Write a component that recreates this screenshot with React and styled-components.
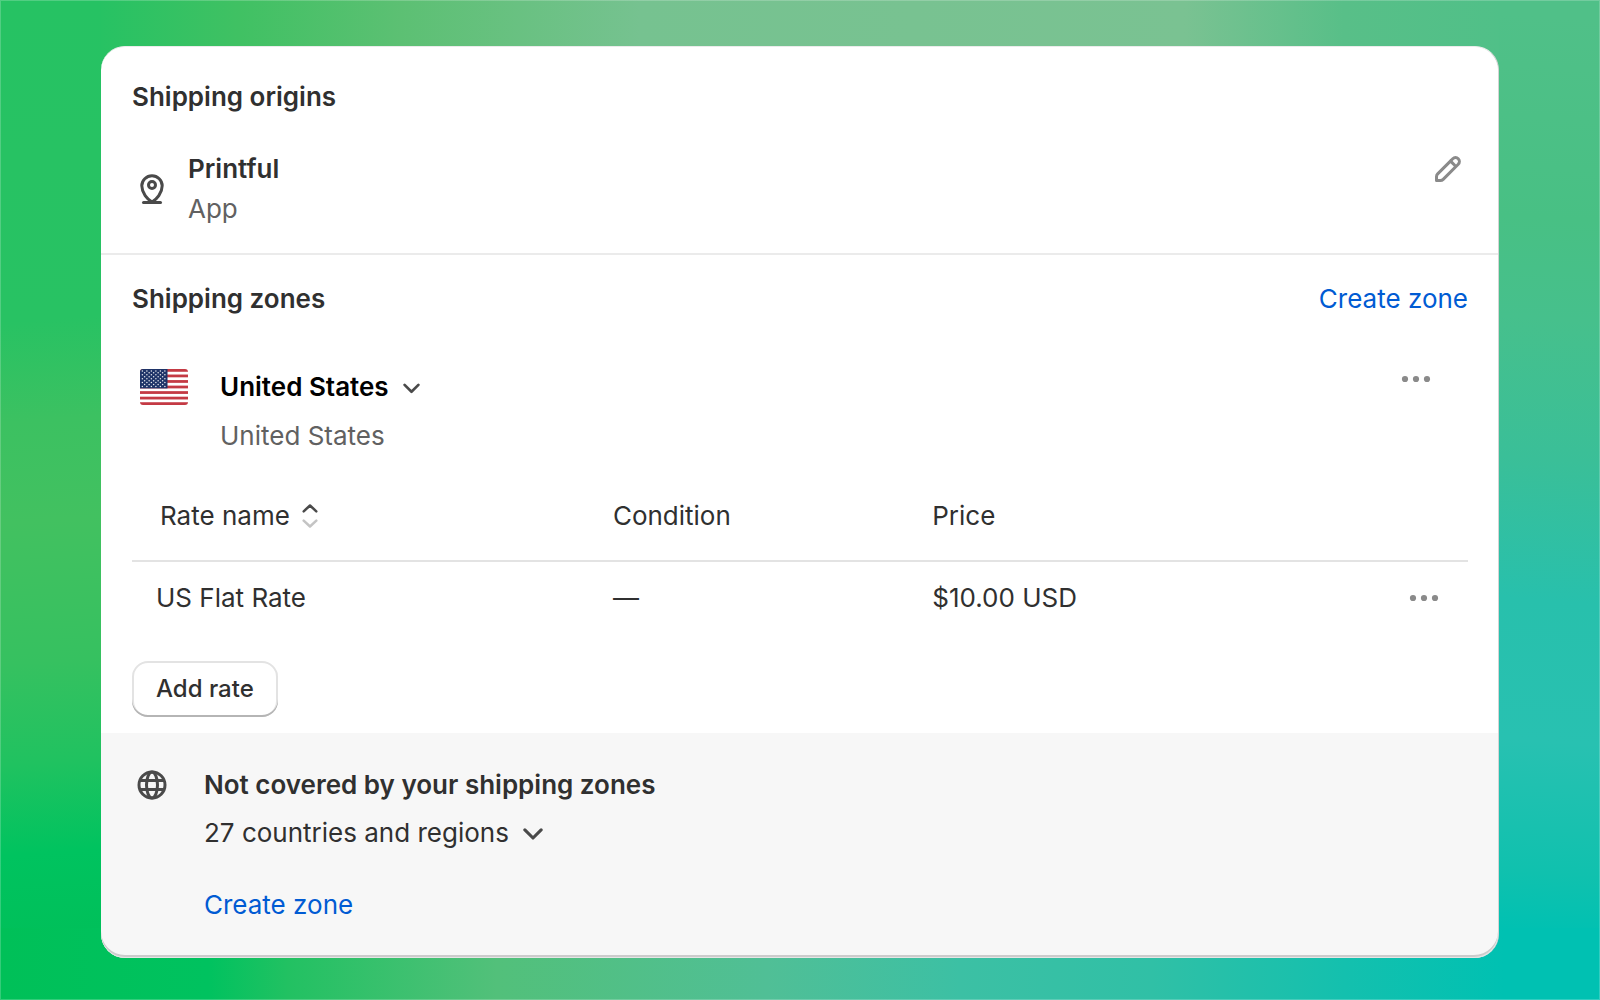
import styled, { createGlobalStyle } from 'styled-components';

const GlobalStyle = createGlobalStyle`
  * {
    box-sizing: border-box;
  }

  body {
    margin: 0;
    color: #303030;
    font-family: Inter, 'Liberation Sans', sans-serif;
    font-size: 26px;
    line-height: 40px;
  }

  button {
    border: 0;
    padding: 0;
    background: none;
    color: inherit;
    font: inherit;
    cursor: pointer;
  }
`;

/* One gradient for each side of the frame around the card */
const Page = styled.main`
  min-height: 100vh;
  padding: 46px 101px 41px;
  background:
    linear-gradient(90deg, #00c058 0%, #00c25f 13%, #22c162 18%, #52c07a 31%, #50bf96 48%, #3cc0a4 60%, #30c0a6 72%, #14c0ae 84%, #00c1b2 94%) bottom / 100% 72px no-repeat,
    linear-gradient(176deg, #26c263 0%, #28c263 32%, #3cc161 42%, #42c160 52%, #36c160 66%, #20c260 76%, #00c35f 85%, #00c05a 93%) left / 101px 100% no-repeat,
    linear-gradient(184deg, #50c088 2%, #48c084 22%, #46c08c 32%, #3abf98 46%, #28c0ac 60%, #28c1b1 74%, #10c1ae 87%, #00c1b2 93%) right / 101px 100% no-repeat,
    linear-gradient(90deg, #24c164 0%, #26c263 6%, #40c163 15%, #5cc073 25%, #76c290 40%, #7ac292 74%, #58bf88 84%, #50c088 94%);
  box-shadow: inset 0 0 0 1px rgba(255, 255, 255, 0.2);
`;

const Card = styled.div`
  overflow: hidden;
  border-top: 1px solid #ebebeb;
  border-right: 1px solid #d4d4d4;
  border-radius: 24px;
  background: white;
`;

const Section = styled.section`
  padding: ${props => props.$padding};

  & + & {
    border-top: 2px solid #ebebeb;
  }
`;

const Uncovered = styled.section`
  display: flex;
  gap: 32px;
  padding: 32px 30px 33px 31px;
  border-radius: 0 0 24px 24px;
  background: #f7f7f7;
  box-shadow: inset 0 -1px 0 #e6e6e6, inset 0 -3px 0 #cccccc;
`;

const SectionHeader = styled.header`
  display: flex;
  justify-content: space-between;
`;

const Title = styled.h2`
  margin: 0;
  font-size: 26px;
  font-weight: 600;
`;

const Name = styled.h3`
  margin: 0;
  font-size: 26px;
  font-weight: 600;
`;

const Text = styled.p`
  margin: 0;
  color: ${props => (props.$subdued ? '#616161' : '#303030')};
`;

const Link = styled.a`
  color: #005bd3;
  text-decoration: none;

  &:hover {
    text-decoration: underline;
  }
`;

const IconSlot = styled.span`
  display: flex;
  flex: none;
  height: 40px;
  color: #4a4a4a;
`;

const IconButton = styled.button`
  display: flex;
  flex: none;
  height: 40px;
  color: #8a8a8a;
`;

const Origin = styled.div`
  display: flex;
  align-items: center;
  gap: 16px;
  margin-top: 32px;

  ${IconButton} {
    align-self: flex-start;
    margin-left: auto;
  }
`;

const Zone = styled.div`
  display: flex;
  align-items: flex-start;
  justify-content: space-between;
  margin-top: 40px;
  padding: 0 32px 0 8px;
`;

const ZoneInfo = styled.div`
  display: grid;
  grid-template-columns: 48px auto;
  align-items: center;
  gap: 9px 32px;
  padding-top: 8px;

  ${Text} {
    grid-column: 2;
  }
`;

const Disclosure = styled.button`
  display: flex;
  align-items: center;
  gap: 14px;
  font-weight: ${props => (props.$strong ? 600 : 400)};
  color: ${props => (props.$strong ? '#000000' : '#303030')};
`;

const Rates = styled.table`
  width: 100%;
  margin-top: 16px;
  border-collapse: separate;
  border-spacing: 0;
  table-layout: fixed;
  text-align: left;
`;

const HeadCell = styled.th`
  width: ${props => props.$width};
  height: 90px;
  padding: 0 24px;
  border-bottom: 2px solid #e3e3e3;
  font-weight: 400;
`;

const Cell = styled.td`
  height: 72px;
  padding: 0 24px;

  ${IconButton} {
    margin-left: auto;
  }
`;

const SortButton = styled.button`
  display: flex;
  align-items: center;
  gap: 12px;
  padding: 0 4px;
`;

const AddButton = styled.button`
  display: block;
  height: 56px;
  margin-top: 27px;
  padding: 0 24px;
  border-radius: 16px;
  background: white;
  box-shadow: inset 0 -2px 0 #b5b5b5, inset 0 0 0 2px #e3e3e3;
  font-size: 24px;
  font-weight: 500;
`;

const UncoveredBody = styled.div`
  display: flex;
  flex-direction: column;
  align-items: flex-start;
  gap: 8px;

  ${Link} {
    margin-top: 24px;
  }
`;

const PinIcon = () => (
  <svg width="40" height="40" viewBox="0 0 20 20" fill="none" stroke="currentColor" strokeWidth="1.5" strokeLinecap="round" aria-hidden="true">
    <path d="M10 16.500c-2.300-1.300-5.100-4.600-5.100-8.100a5.100 5 0 0 1 10.200 0c0 3.500-2.800 6.800-5.100 8.100Z" />
    <circle cx="10" cy="8" r="1.750" />
    <path d="M5.750 16.750h8.500" />
  </svg>
);

const EditIcon = () => (
  <svg width="40" height="40" viewBox="0 0 20 20" fill="currentColor" aria-hidden="true">
    <path
      fillRule="evenodd"
      d="M15.655 4.344a2.695 2.695 0 0 0-3.81 0l-.599.599-.009-.009-1.06 1.06.008.01-5.88 5.88a2.75 2.75 0 0 0-.805 1.944v1.922a.75.75 0 0 0 .75.75h1.922a2.75 2.75 0 0 0 1.944-.806l7.54-7.539a2.695 2.695 0 0 0 0-3.81Zm-4.409 2.72-5.88 5.88a1.25 1.25 0 0 0-.366.884v1.172h1.172c.331 0 .65-.132.883-.366l5.88-5.88-1.689-1.69Zm2.75.629.599-.599a1.195 1.195 0 1 0-1.69-1.689l-.598.599 1.69 1.689Z"
    />
  </svg>
);

const GlobeIcon = () => (
  <svg width="40" height="40" viewBox="0 0 20 20" fill="none" stroke="currentColor" strokeWidth="1.5" aria-hidden="true">
    <circle cx="10" cy="10" r="6.5" />
    <ellipse cx="10" cy="10" rx="2.75" ry="6.5" />
    <path d="M4 7.750h12M4 12.250h12" />
  </svg>
);

const MoreIcon = () => (
  <svg width="40" height="40" viewBox="0 0 40 40" fill="currentColor" aria-hidden="true">
    <circle cx="9" cy="20" r="3.100" />
    <circle cx="20" cy="20" r="3.100" />
    <circle cx="31" cy="20" r="3.100" />
  </svg>
);

const ChevronIcon = ({ size }) => (
  <svg width={size} height={size} viewBox="0 0 16 16" fill="none" stroke="#4a4a4a" strokeWidth="2.500" strokeLinecap="round" strokeLinejoin="round" aria-hidden="true">
    <path d="M1.500 5.500 8 12l6.500-6.500" />
  </svg>
);

const SortIcon = () => (
  <svg width="16" height="24" viewBox="0 0 16 24" fill="none" strokeWidth="2.500" strokeLinecap="round" strokeLinejoin="round" aria-hidden="true">
    <path d="M1.700 7.300 8 1.500l6.300 5.800" stroke="#4a4a4a" />
    <path d="M1.700 16.700 8 22.500l6.300-5.800" stroke="#c4c4c4" />
  </svg>
);

const STRIPES = [0, 2, 4, 6, 8, 10, 12];
const STAR_ROWS = [0, 1, 2, 3, 4, 5, 6, 7, 8];

const FlagIcon = () => (
  <svg width="48" height="36" viewBox="0 0 48 36" role="img" aria-label="Flag of the United States">
    <clipPath id="flag">
      <rect width="48" height="36" rx="3" />
    </clipPath>
    <g clipPath="url(#flag)">
      <rect width="48" height="36" fill="#fff" />
      {STRIPES.map(i => (
        <rect key={i} y={(i * 36) / 13} width="48" height={36 / 13} fill="#c43a44" />
      ))}
      <rect width="27.500" height="19.400" fill="#1f3468" />
      {STAR_ROWS.map(row =>
        [0, 1, 2, 3, 4, 5].slice(row % 2).map(col => (
          <circle key={`${row}-${col}`} cx={2.4 + col * 4.500 - (row % 2) * 2.250} cy={1.900 + row * 1.950} r="0.750" fill="#e6e8ee" />
        ))
      )}
    </g>
  </svg>
);

const rates = [{ name: 'US Flat Rate', condition: '—', price: '$10.00 USD' }];

const App = () => {
  return (
    <>
      <GlobalStyle />
      <Page>
        <Card>
          <Section $padding="30px 30px 24px 31px">
            <Title>Shipping origins</Title>
            <Origin>
              <IconSlot>
                <PinIcon />
              </IconSlot>
              <div>
                <Name>Printful</Name>
                <Text $subdued>App</Text>
              </div>
              <IconButton type="button" aria-label="Edit origin">
                <EditIcon />
              </IconButton>
            </Origin>
          </Section>

          <Section $padding="24px 30px 16px 31px">
            <SectionHeader>
              <Title>Shipping zones</Title>
              <Link href="#create-zone">Create zone</Link>
            </SectionHeader>
            <Zone>
              <ZoneInfo>
                <FlagIcon />
                <Disclosure type="button" $strong>
                  United States
                  <ChevronIcon size={17} />
                </Disclosure>
                <Text $subdued>United States</Text>
              </ZoneInfo>
              <IconButton type="button" aria-label="Zone actions">
                <MoreIcon />
              </IconButton>
            </Zone>

            <Rates>
              <thead>
                <tr>
                  <HeadCell $width="34.2%">
                    <SortButton type="button">
                      Rate name
                      <SortIcon />
                    </SortButton>
                  </HeadCell>
                  <HeadCell $width="23.9%">Condition</HeadCell>
                  <HeadCell>Price</HeadCell>
                  <HeadCell $width="10%" aria-label="Actions" />
                </tr>
              </thead>
              <tbody>
                {rates.map(rate => (
                  <tr key={rate.name}>
                    <Cell>{rate.name}</Cell>
                    <Cell>{rate.condition}</Cell>
                    <Cell>{rate.price}</Cell>
                    <Cell>
                      <IconButton type="button" aria-label="Rate actions">
                        <MoreIcon />
                      </IconButton>
                    </Cell>
                  </tr>
                ))}
              </tbody>
            </Rates>
            <AddButton type="button">Add rate</AddButton>
          </Section>

          <Uncovered>
            <IconSlot>
              <GlobeIcon />
            </IconSlot>
            <UncoveredBody>
              <Title>Not covered by your shipping zones</Title>
              <Disclosure type="button">
                27 countries and regions
                <ChevronIcon size={20} />
              </Disclosure>
              <Link href="#create-zone">Create zone</Link>
            </UncoveredBody>
          </Uncovered>
        </Card>
      </Page>
    </>
  );
};

export default App;
